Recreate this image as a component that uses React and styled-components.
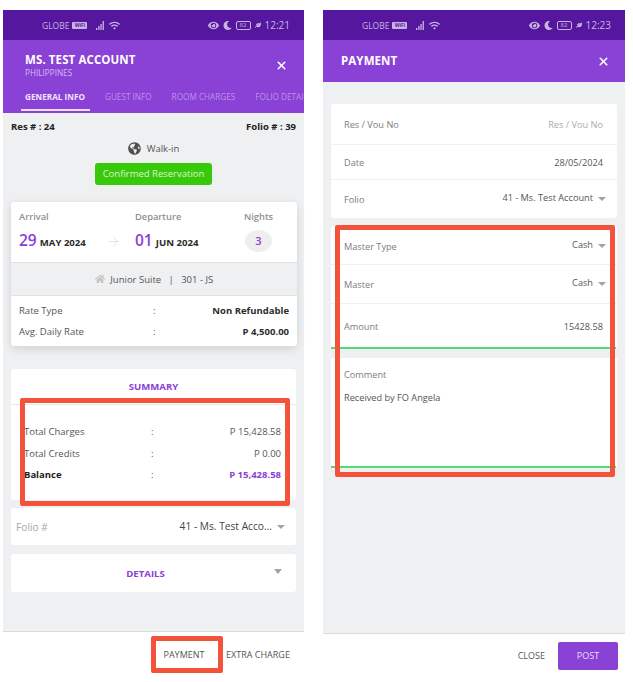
import React from "react";
import styled, { createGlobalStyle } from "styled-components";
import { ArrowRight, X } from "lucide-react";
import { FaGlobeAmericas, FaHome, FaEye, FaMoon, FaLeaf, FaWifi } from "react-icons/fa";

const GlobalStyle = createGlobalStyle`
  html, body {
    margin: 0;
    padding: 0;
    background: #fff;
    overflow: hidden;
  }
  * { box-sizing: border-box; }
`;

const Page = styled.div`
  display: flex;
  gap: 19px;
  width: 633px;
  height: 682px;
  padding: 10px 0 0 3px;
  font-family: "Open Sans", "Noto Sans", sans-serif;
  color: #444;
`;

const Phone = styled.div`
  position: relative;
  display: flex;
  flex-direction: column;
  width: ${(p) => p.$width}px;
  height: 667px;
`;

const StatusBar = styled.div`
  display: flex;
  align-items: center;
  justify-content: space-between;
  height: 30px;
  padding: 0 14px 0 39px;
  background: #55179e;
  color: #c9b5e3;
  font-size: 8.5px;
`;

const StatusGroup = styled.div`
  display: flex;
  align-items: center;
  gap: ${(p) => p.$gap || 3}px;
`;

const Wifi2 = styled.span`
  width: 15px;
  border-radius: 1px;
  background: #c9b5e3;
  color: #55179e;
  font-size: 5px;
  font-weight: 700;
  line-height: 7px;
  text-align: center;
`;

const SignalBars = styled.svg`
  margin-left: 6px;
  fill: #c9b5e3;
`;

const Battery = styled.span`
  width: 15px;
  height: 9px;
  border: 1px solid #c9b5e3;
  border-radius: 2px;
  font-size: 6px;
  line-height: 7px;
  text-align: center;
`;

const Clock = styled.span`
  font-size: 10px;
`;

const Header = styled.div`
  display: flex;
  align-items: center;
  justify-content: space-between;
  height: ${(p) => p.$height}px;
  padding: ${(p) => p.$padding};
  background: #8a41d6;
  color: #fff;
`;

const HeaderBlock = styled.div`
  background: #8a41d6;
`;

const Name = styled.div`
  font-size: 11.5px;
  font-weight: 700;
  line-height: 14px;
  letter-spacing: 0.1px;
`;

const Country = styled.div`
  color: #d4bcef;
  font-size: 8.2px;
  line-height: 12px;
`;

const Tabs = styled.div`
  display: flex;
  height: 26px;
  padding-left: 22px;
  overflow: hidden;
  white-space: nowrap;
`;

const Tab = styled.div`
  position: relative;
  flex: none;
  margin-right: 20px;
  padding: 4px 0 0;
  color: ${(p) => (p.$active ? "#f0e6fb" : "#bb94e8")};
  font-size: 8.2px;
  font-weight: ${(p) => (p.$active ? 700 : 400)};
  &::after {
    content: "";
    display: ${(p) => (p.$active ? "block" : "none")};
    position: absolute;
    left: -4px;
    right: -5px;
    bottom: 2px;
    height: 2px;
    background: #e9def6;
  }
`;

const Body = styled.div`
  flex: 1;
  display: flex;
  flex-direction: column;
  padding: ${(p) => p.$padding};
  background: #eef0f2;
`;

const ResRow = styled.div`
  display: flex;
  justify-content: space-between;
  height: 16px;
  padding: 0 8px 0 8px;
  color: #222;
  font-size: 9.5px;
  font-weight: 700;
  line-height: 16px;
`;

const Source = styled.div`
  display: flex;
  align-items: center;
  justify-content: center;
  gap: 6px;
  height: 16px;
  margin: 5px 0 7px;
  color: #555;
  font-size: 9.5px;
`;

const Badge = styled.div`
  align-self: center;
  width: 117px;
  height: 22px;
  border-radius: 3px;
  background: #37c90a;
  color: #ddf5d3;
  font-size: 9.5px;
  line-height: 22px;
  text-align: center;
`;

const Card = styled.div`
  overflow: hidden;
  width: ${(p) => p.$width}px;
  height: ${(p) => p.$height}px;
  margin: ${(p) => p.$margin};
  border-radius: 3px;
  background: #fff;
  box-shadow: ${(p) => (p.$shadow ? "0 3px 10px rgba(0, 0, 0, 0.13)" : "none")};
`;

const Dates = styled.div`
  display: grid;
  grid-template-columns: 116px 109px 1fr;
  height: 60px;
  padding: 9px 0 0 8px;
`;

const DateLabel = styled.div`
  color: #8f8f8f;
  font-size: 9.3px;
  font-weight: 600;
  line-height: 12px;
`;

const DateValue = styled.div`
  position: relative;
  display: flex;
  align-items: baseline;
  gap: 3px;
  margin-top: 6px;
  color: #2c2c2c;
  font-size: 9.6px;
  font-weight: 700;
  line-height: 22px;
`;

const Day = styled.span`
  color: #8a41d6;
  font-size: 15.5px;
  font-weight: 600;
`;

const DateArrow = styled(ArrowRight)`
  position: absolute;
  right: 14px;
  top: 5px;
  color: #d4d4d4;
`;

const NightsBadge = styled.div`
  width: 27px;
  height: 22px;
  margin: 7px 0 0 1px;
  border-radius: 50%;
  background: #eeeeee;
  color: #8a41d6;
  font-size: 11px;
  font-weight: 600;
  line-height: 22px;
  text-align: center;
`;

const RoomBar = styled.div`
  display: flex;
  align-items: center;
  justify-content: center;
  gap: 3px;
  height: 34px;
  border-top: 1px solid #dfe1e4;
  border-bottom: 1px solid #dfe1e4;
  background: #eef0f2;
  color: #555;
  font-size: 9.5px;
  white-space: pre;
  svg { color: #c4c4c4; }
`;

const Rows = styled.div`
  padding: ${(p) => p.$padding};
`;

const InfoRow = styled.div`
  display: grid;
  grid-template-columns: ${(p) => p.$label}px 14px 1fr;
  height: ${(p) => p.$height}px;
  color: #555;
  font-size: 9.5px;
  line-height: ${(p) => p.$height}px;
`;

const Value = styled.div`
  text-align: right;
  color: ${(p) => p.$color || "inherit"};
  font-weight: ${(p) => (p.$bold ? 700 : 400)};
`;

const Strong = styled.div`
  color: #222;
  font-weight: 700;
`;

const CardTitle = styled.div`
  height: 36px;
  border-bottom: 1px solid #e6e7e9;
  color: #8a41d6;
  font-size: 9.6px;
  font-weight: 700;
  line-height: 36px;
  text-align: center;
`;

const FolioRow = styled.div`
  display: flex;
  align-items: center;
  justify-content: space-between;
  height: 100%;
  padding: 0 11px 2px 5px;
  font-size: 10.2px;
`;

const FolioLabel = styled.span`
  padding-top: 3px;
  color: #a9a9a9;
`;

const Select = styled.span`
  display: flex;
  align-items: center;
  gap: 5px;
`;

const Caret = styled.i`
  display: block;
  width: 0;
  height: 0;
  margin-top: 2px;
  border-left: 4px solid transparent;
  border-right: 4px solid transparent;
  border-top: 4px solid #a3a3a3;
`;

const DetailsRow = styled.div`
  position: relative;
  height: 100%;
  padding-right: 16px;
  color: #8a41d6;
  font-size: 9.6px;
  font-weight: 700;
  line-height: 39px;
  text-align: center;
`;

const DetailsCaret = styled(Caret)`
  position: absolute;
  top: 13px;
  right: 14px;
  border-left-width: 4.5px;
  border-right-width: 4.5px;
  border-top-width: 5px;
`;

const Footer = styled.div`
  display: flex;
  align-items: center;
  justify-content: flex-end;
  height: ${(p) => p.$height}px;
  padding: ${(p) => p.$padding};
  border-top: 1px solid #dadada;
  background: #fff;
  color: #555;
  font-size: 9px;
`;

const FooterAction = styled.span`
  width: ${(p) => p.$width}px;
  margin-left: ${(p) => p.$gap || 0}px;
  text-align: center;
`;

const PostButton = styled.div`
  width: 60px;
  height: 28px;
  margin-left: 13px;
  border-radius: 2px;
  background: #8a41d6;
  color: #ecdff9;
  font-size: 9px;
  line-height: 28px;
  text-align: center;
`;

const FormCard = styled.div`
  width: 286px;
  margin-bottom: ${(p) => p.$gap || 0}px;
  border-radius: 3px;
  background: #fff;
`;

const FormRow = styled.div`
  display: flex;
  justify-content: space-between;
  align-items: ${(p) => (p.$top ? "flex-start" : "center")};
  height: ${(p) => p.$height}px;
  padding: ${(p) => (p.$top ? `${p.$top}px 11px 0 13px` : "0 14px 0 13px")};
  border-bottom: ${(p) => (p.$last ? "none" : "1px solid #f0f0f0")};
  color: #555;
  font-size: 9.2px;
`;

const FormLabel = styled.span`
  color: #7c7c7c;
  font-size: 9.2px;
  padding-top: ${(p) => (p.$select ? 2 : 0)}px;
`;

const Placeholder = styled.span`
  color: #acacac;
`;

const CommentCard = styled.div`
  width: 286px;
  height: 109px;
  padding: 10px 13px;
  background: #fff;
  color: #555;
  font-size: 9.2px;
`;

const CommentText = styled.div`
  margin-top: 10px;
`;

const Annotation = styled.div`
  position: absolute;
  left: ${(p) => p.$left}px;
  top: ${(p) => p.$top}px;
  width: ${(p) => p.$width}px;
  height: ${(p) => p.$height}px;
  border: 5px solid #f2533a;
  border-radius: 2px;
`;

const GreenLine = styled.div`
  position: absolute;
  left: 8px;
  top: ${(p) => p.$top}px;
  width: 285px;
  height: 2px;
  background: #4fdc77;
`;

function Status({ time }) {
  return (
    <StatusBar>
      <StatusGroup>
        <span>GLOBE</span>
        <Wifi2>WiFi</Wifi2>
        <SignalBars width="10" height="9" viewBox="0 0 10 9">
          <rect x="0" y="7" width="1.3" height="2" />
          <rect x="2.2" y="5" width="1.3" height="4" />
          <rect x="4.4" y="3" width="1.3" height="6" />
          <rect x="6.6" y="0" width="1.3" height="9" />
        </SignalBars>
        <FaWifi size={11} />
      </StatusGroup>
      <StatusGroup $gap={4}>
        <FaEye size={11} />
        <FaMoon size={9} />
        <Battery>82</Battery>
        <FaLeaf size={6} />
        <Clock>{time}</Clock>
      </StatusGroup>
    </StatusBar>
  );
}

function LeftScreen() {
  return (
    <Phone $width={301}>
      <Status time="12:21" />
      <HeaderBlock>
        <Header $height={47} $padding="4px 16px 0 22px">
          <div>
            <Name>MS. TEST ACCOUNT</Name>
            <Country>PHILIPPINES</Country>
          </div>
          <X size={13} strokeWidth={3} />
        </Header>
        <Tabs>
          <Tab $active>GENERAL INFO</Tab>
          <Tab>GUEST INFO</Tab>
          <Tab>ROOM CHARGES</Tab>
          <Tab>FOLIO DETAILS</Tab>
        </Tabs>
      </HeaderBlock>
      <Body $padding="6px 0 0">
        <ResRow>
          <span>Res # : 24</span>
          <span>Folio # : 39</span>
        </ResRow>
        <Source>
          <FaGlobeAmericas size={13} color="#4f4f4f" />
          Walk-in
        </Source>
        <Badge>Confirmed Reservation</Badge>
        <Card $width={286} $height={144} $margin="17px 0 0 8px" $shadow>
          <Dates>
            <div>
              <DateLabel>Arrival</DateLabel>
              <DateValue>
                <Day>29</Day> MAY 2024
                <DateArrow size={15} strokeWidth={1} />
              </DateValue>
            </div>
            <div>
              <DateLabel>Departure</DateLabel>
              <DateValue>
                <Day>01</Day> JUN 2024
              </DateValue>
            </div>
            <div>
              <DateLabel>Nights</DateLabel>
              <NightsBadge>3</NightsBadge>
            </div>
          </Dates>
          <RoomBar>
            <FaHome size={10} />
            {" Junior Suite   |   301 - JS"}
          </RoomBar>
          <Rows $padding="4px 8px 0">
            <InfoRow $height={21} $label={134}>
              <span>Rate Type</span>
              <span>:</span>
              <Value $bold $color="#2c2c2c">Non Refundable</Value>
            </InfoRow>
            <InfoRow $height={21} $label={134}>
              <span>Avg. Daily Rate</span>
              <span>:</span>
              <Value $bold $color="#2c2c2c">P 4,500.00</Value>
            </InfoRow>
          </Rows>
        </Card>
        <Card $width={285} $height={131} $margin="23px 0 0 8px">
          <CardTitle>SUMMARY</CardTitle>
          <Rows $padding="16px 15px 0 13px">
            <InfoRow $height={21.5} $label={127}>
              <span>Total Charges</span>
              <span>:</span>
              <Value>P 15,428.58</Value>
            </InfoRow>
            <InfoRow $height={21.5} $label={127}>
              <span>Total Credits</span>
              <span>:</span>
              <Value>P 0.00</Value>
            </InfoRow>
            <InfoRow $height={21.5} $label={127}>
              <Strong>Balance</Strong>
              <span>:</span>
              <Value $bold $color="#8a41d6">P 15,428.58</Value>
            </InfoRow>
          </Rows>
        </Card>
        <Card $width={285} $height={37} $margin="8px 0 0 8px">
          <FolioRow>
            <FolioLabel>Folio #</FolioLabel>
            <Select>
              41 - Ms. Test Acco...
              <Caret />
            </Select>
          </FolioRow>
        </Card>
        <Card $width={285} $height={38} $margin="9px 0 0 8px">
          <DetailsRow>
            DETAILS
            <DetailsCaret />
          </DetailsRow>
        </Card>
      </Body>
      <Footer $height={46} $padding="0 11px 0 0">
        <FooterAction $width={62}>PAYMENT</FooterAction>
        <FooterAction $width={70} $gap={8}>EXTRA CHARGE</FooterAction>
      </Footer>
      <Annotation $left={17} $top={388} $width={270} $height={108} />
      <Annotation $left={148} $top={626} $width={72} $height={37} />
    </Phone>
  );
}

function RightScreen() {
  return (
    <Phone $width={302}>
      <Status time="12:23" />
      <Header $height={42} $padding="0 15px 0 18px">
        <Name>PAYMENT</Name>
        <X size={13} strokeWidth={3} />
      </Header>
      <Body $padding="22px 0 0 8px">
        <FormCard $gap={8}>
          <FormRow $height={41}>
            <FormLabel>Res / Vou No</FormLabel>
            <Placeholder>Res / Vou No</Placeholder>
          </FormRow>
          <FormRow $height={35}>
            <FormLabel>Date</FormLabel>
            <span>28/05/2024</span>
          </FormRow>
          <FormRow $height={38} $top={11} $last>
            <FormLabel $select>Folio</FormLabel>
            <Select>
              41 - Ms. Test Account
              <Caret />
            </Select>
          </FormRow>
        </FormCard>
        <FormCard $gap={10}>
          <FormRow $height={39} $top={12}>
            <FormLabel $select>Master Type</FormLabel>
            <Select>
              Cash
              <Caret />
            </Select>
          </FormRow>
          <FormRow $height={39} $top={11}>
            <FormLabel $select>Master</FormLabel>
            <Select>
              Cash
              <Caret />
            </Select>
          </FormRow>
          <FormRow $height={44} $last>
            <FormLabel>Amount</FormLabel>
            <span>15428.58</span>
          </FormRow>
        </FormCard>
        <CommentCard>
          <FormLabel>Comment</FormLabel>
          <CommentText>Received by FO Angela</CommentText>
        </CommentCard>
      </Body>
      <Footer $height={44} $padding="0 7px 0 0">
        <span>CLOSE</span>
        <PostButton>POST</PostButton>
      </Footer>
      <GreenLine $top={337} />
      <GreenLine $top={456} />
      <Annotation $left={12} $top={215} $width={280} $height={252} />
    </Phone>
  );
}

export default function App() {
  return (
    <Page>
      <GlobalStyle />
      <LeftScreen />
      <RightScreen />
    </Page>
  );
}
